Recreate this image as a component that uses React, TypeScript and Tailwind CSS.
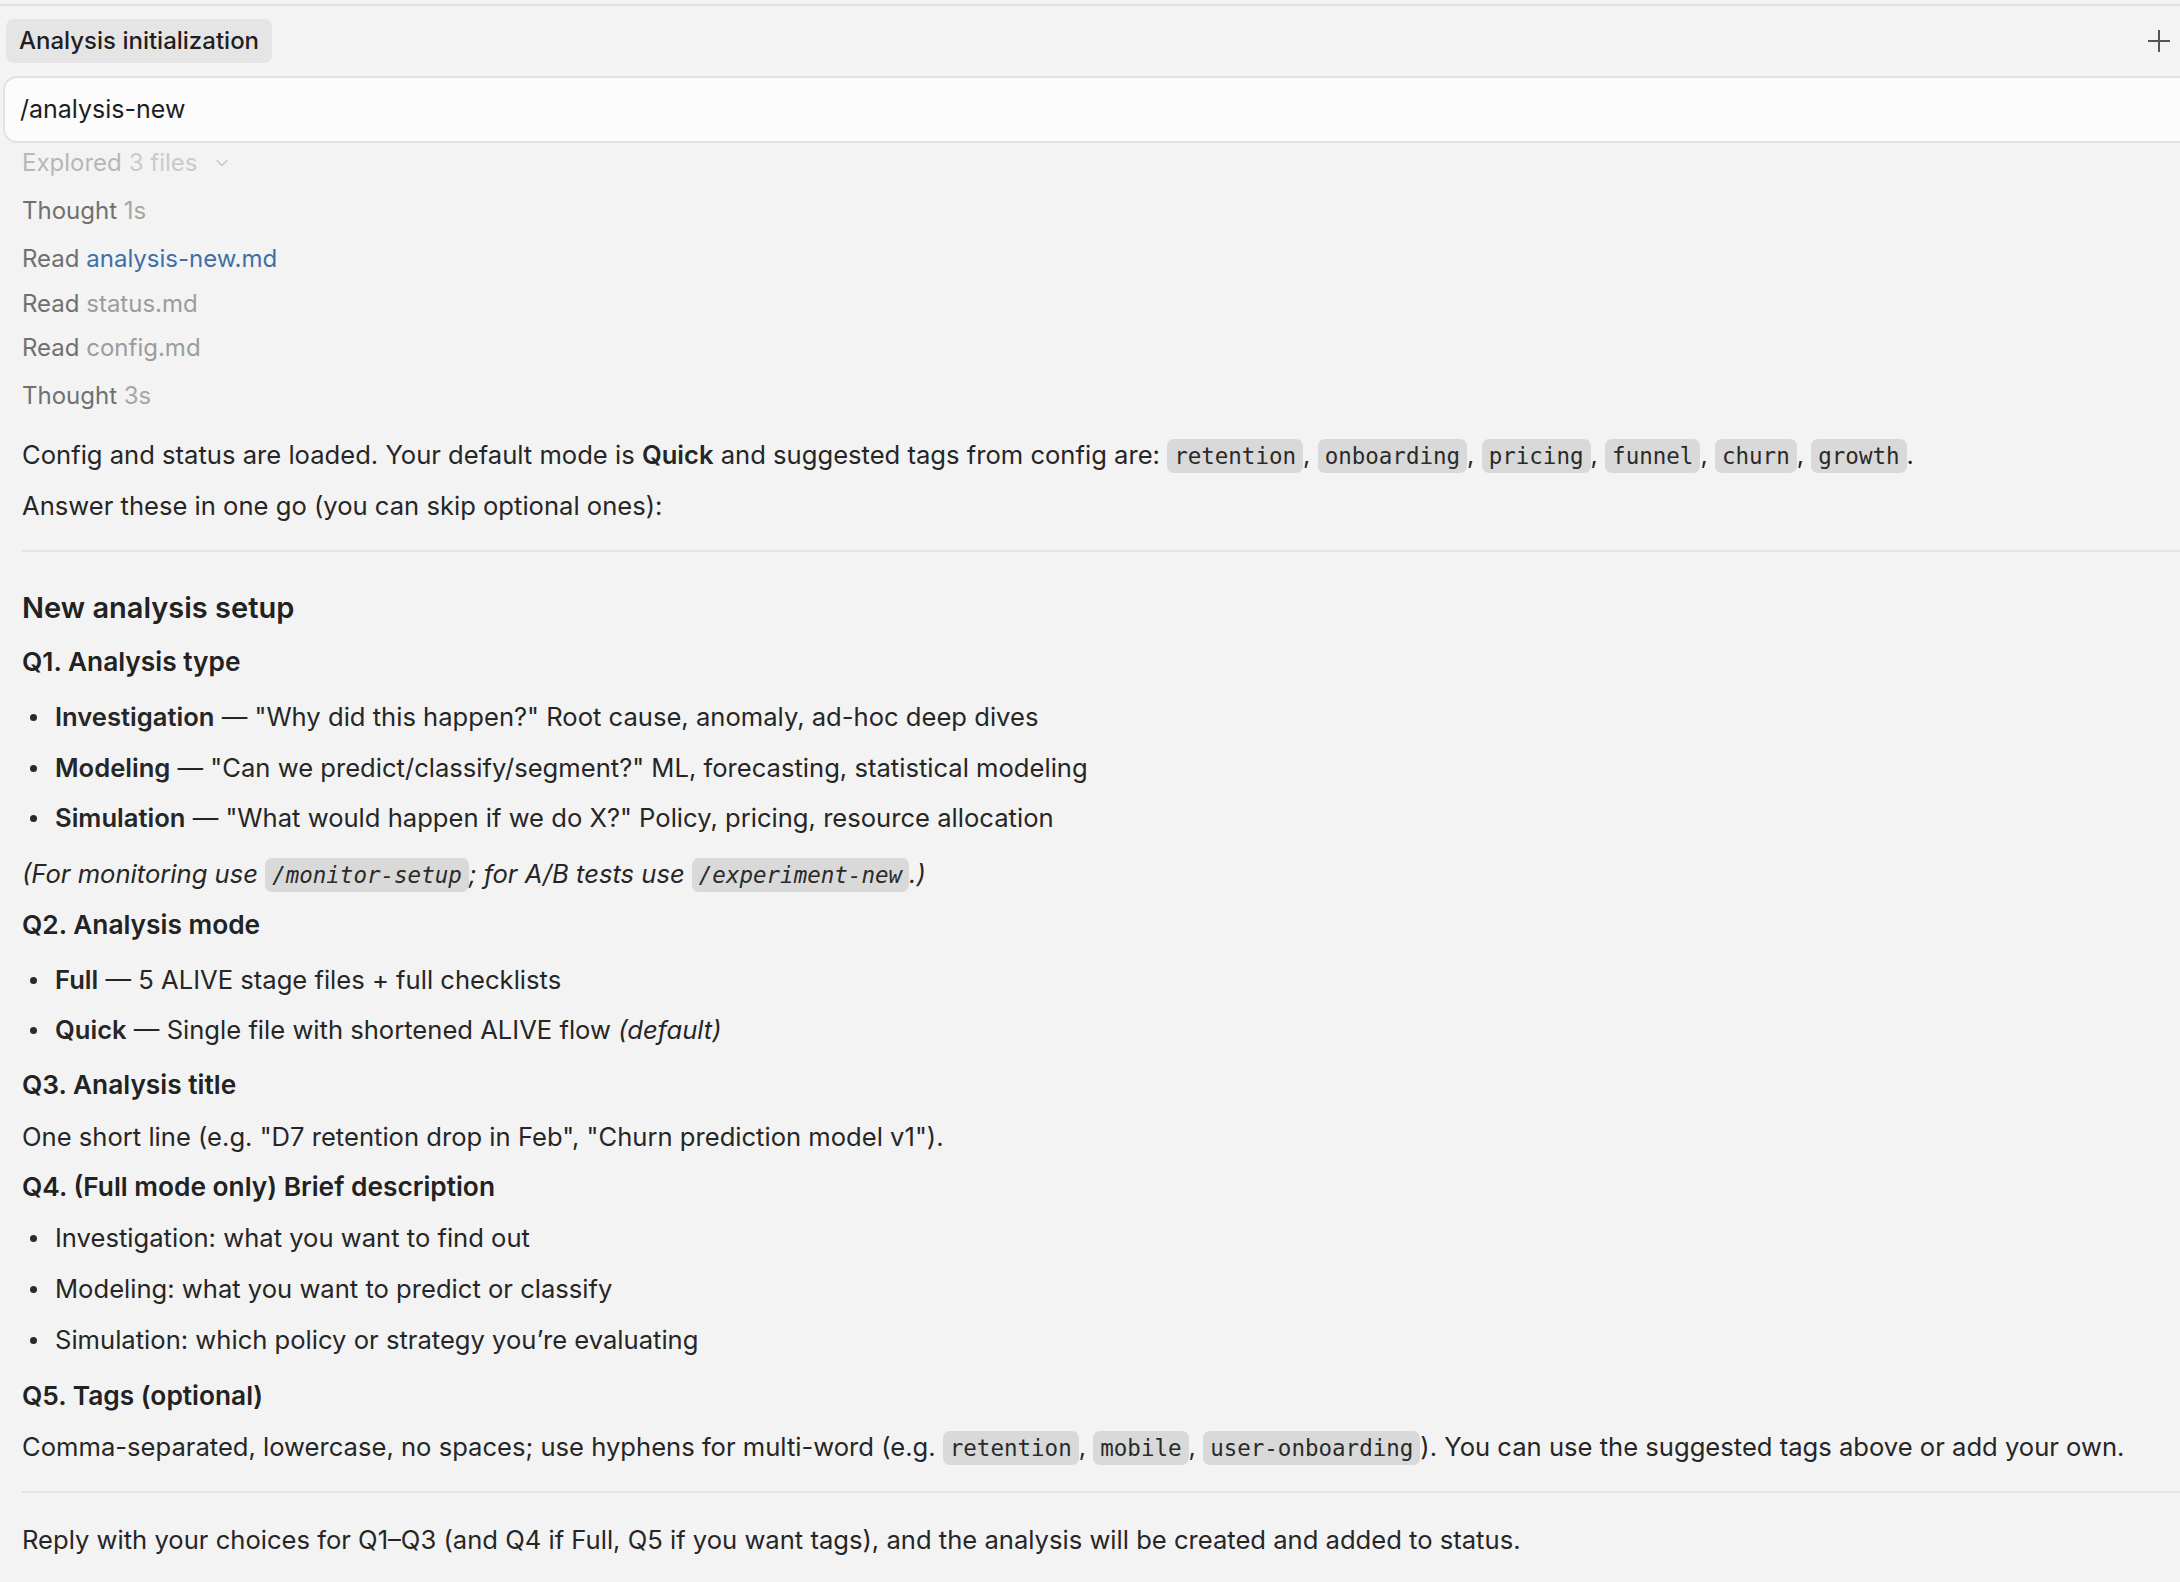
import { ChevronDown } from "lucide-react";

const sans = { fontFamily: "Inter, 'Noto Sans', sans-serif" };

function Code({ children, italic }: { children: React.ReactNode; italic?: boolean }) {
  return (
    <code
      className={`inline-block rounded-[7px] bg-[#d9d9d9] px-[7px] font-['DejaVu_Sans_Mono',monospace] text-[22.5px] leading-[34px] text-[#2a2a2a] ${
        italic ? "italic" : ""
      }`}
    >
      {children}
    </code>
  );
}

function Bullet({ children, className = "" }: { children: React.ReactNode; className?: string }) {
  return (
    <div className={`flex items-center leading-9 ${className}`}>
      <span className="ml-[8px] mr-[18px] h-[7px] w-[7px] rounded-full bg-[#2a2a2a]" />
      <span>{children}</span>
    </div>
  );
}

function Heading({ children, className = "" }: { children: React.ReactNode; className?: string }) {
  return <div className={`text-[26.3px] font-semibold leading-9 text-[#222] ${className}`}>{children}</div>;
}

export default function App() {
  const tags = ["retention", "onboarding", "pricing", "funnel", "churn", "growth"];

  return (
    <div className="h-[1582px] w-[2180px] overflow-hidden bg-[#f3f3f3] text-[24px] text-[#262626]" style={sans}>
      <div className="pt-[4px]">
        <div className="h-[2px] bg-[#e2e2e2]" />
      </div>

      {/* header */}
      <div className="flex h-[70px] items-center justify-between">
        <div className="ml-[6px] flex h-[44px] items-center rounded-[8px] bg-[#e5e5e5] px-[13px] font-medium text-[#1f1f1f]">
          Analysis initialization
        </div>
        <svg width="24" height="24" viewBox="0 0 24 24" className="mr-[9px]">
          <path d="M12 1v22M1 12h22" stroke="#555" strokeWidth="2" />
        </svg>
      </div>

      <div className="-mr-8 ml-[3px] flex h-[67px] items-center rounded-[14px] border-2 border-[#e2e2e2] bg-[#fcfcfc] pl-[15px] text-[25px] text-[#1e1e1e]">
        /analysis-new
      </div>

      {/* activity log */}
      <div className="pl-[22px]">
        <div className="mt-[2px] flex items-center leading-9">
          <span className="text-[#b7b7b7]">Explored</span>
          <span className="ml-[7px] text-[#cacaca]">3 files</span>
          <ChevronDown className="ml-[14px] h-[20px] w-[20px] text-[#c8c8c8]" strokeWidth={1.8} />
        </div>
        <div className="mt-3 leading-9 text-[#707070]">
          Thought <span className="text-[#a6a6a6]">1s</span>
        </div>
        <div className="mt-3 leading-9 text-[#707070]">
          Read <span className="text-[#3f6fa6]">analysis-new.md</span>
        </div>
        <div className="mt-[9px] leading-9 text-[#707070]">
          Read <span className="text-[#9c9c9c]">status.md</span>
        </div>
        <div className="mt-2 leading-9 text-[#707070]">
          Read <span className="text-[#9c9c9c]">config.md</span>
        </div>
        <div className="mt-3 leading-9 text-[#707070]">
          Thought <span className="text-[#a6a6a6]">3s</span>
        </div>

        {/* message */}
        <div className="text-[25.6px]">
          <div className="mt-[23px] whitespace-nowrap leading-9">
            Config and status are loaded. Your default mode is <b className="font-semibold">Quick</b> and suggested
            tags from config are:{" "}
            {tags.map((t, i) => (
              <span key={t}>
                <Code>{t}</Code>
                {i < tags.length - 1 ? ", " : "."}
              </span>
            ))}
          </div>
          <div className="mt-[15px] leading-9">Answer these in one go (you can skip optional ones):</div>

          <div className="mt-[26px] h-[2px] bg-[#e3e3e3]" />

          <div className="mt-[36px] text-[29px] font-semibold leading-10 text-[#222]">New analysis setup</div>

          <Heading className="mt-4">Q1. Analysis type</Heading>
          <Bullet className="mt-[19px]">
            <b className="font-semibold">Investigation</b> — "Why did this happen?" Root cause, anomaly, ad-hoc deep
            dives
          </Bullet>
          <Bullet className="mt-[15px]">
            <b className="font-semibold">Modeling</b> — "Can we predict/classify/segment?" ML, forecasting, statistical
            modeling
          </Bullet>
          <Bullet className="mt-[14px]">
            <b className="font-semibold">Simulation</b> — "What would happen if we do X?" Policy, pricing, resource
            allocation
          </Bullet>
          <div className="mt-5 italic leading-9">
            (For monitoring use <Code italic>/monitor-setup</Code>; for A/B tests use{" "}
            <Code italic>/experiment-new</Code>.)
          </div>

          <Heading className="mt-[15px]">Q2. Analysis mode</Heading>
          <Bullet className="mt-[19px]">
            <b className="font-semibold">Full</b> — 5 ALIVE stage files + full checklists
          </Bullet>
          <Bullet className="mt-[14px]">
            <b className="font-semibold">Quick</b> — Single file with shortened ALIVE flow <i>(default)</i>
          </Bullet>

          <Heading className="mt-[19px]">Q3. Analysis title</Heading>
          <div className="mt-4 leading-9">
            One short line (e.g. "D7 retention drop in Feb", "Churn prediction model v1").
          </div>

          <Heading className="mt-[14px]">Q4. (Full mode only) Brief description</Heading>
          <Bullet className="mt-[15px]">Investigation: what you want to find out</Bullet>
          <Bullet className="mt-[15px]">Modeling: what you want to predict or classify</Bullet>
          <Bullet className="mt-[15px]">Simulation: which policy or strategy you’re evaluating</Bullet>

          <Heading className="mt-5">Q5. Tags (optional)</Heading>
          <div className="mt-[15px] whitespace-nowrap leading-9">
            Comma-separated, lowercase, no spaces; use hyphens for multi-word (e.g. <Code>retention</Code>,{" "}
            <Code>mobile</Code>, <Code>user-onboarding</Code>). You can use the suggested tags above or add your own.
          </div>

          <div className="mt-[26px] h-[2px] bg-[#e3e3e3]" />

          <div className="mt-[29px] leading-9">
            Reply with your choices for Q1–Q3 (and Q4 if Full, Q5 if you want tags), and the analysis will be created
            and added to status.
          </div>
        </div>
      </div>
    </div>
  );
}
